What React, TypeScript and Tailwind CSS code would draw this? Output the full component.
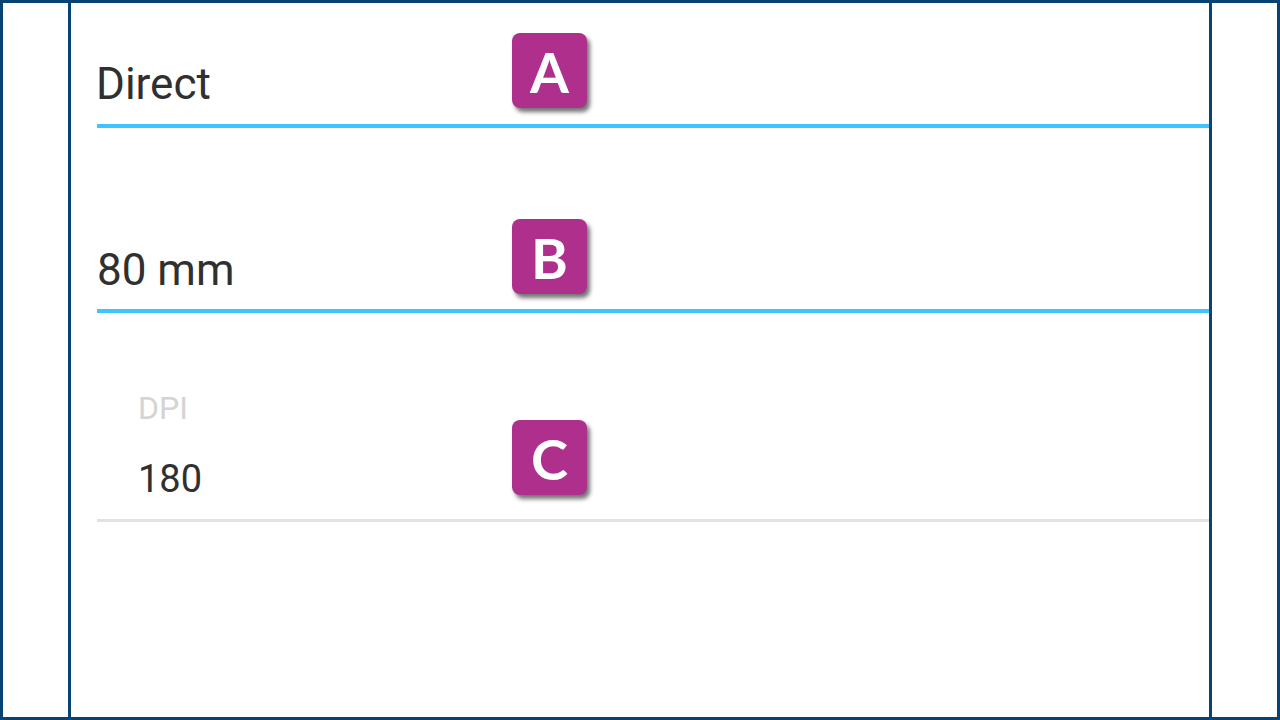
import React from "react";

function Badge({ letter, top }: { letter: string; top: string }) {
  return (
    <div
      className={`absolute left-[441px] ${top} flex h-[75px] w-[75px] items-center justify-center rounded-[8px] bg-[#ae2f8c] text-[56px] font-bold leading-none text-white shadow-[3px_4px_4px_rgba(0,0,0,0.55)]`}
      style={{ fontFamily: "Lato, 'Open Sans', sans-serif" }}
    >
      <span className="mt-[2px]">{letter}</span>
    </div>
  );
}

export default function App() {
  return (
    <div className="h-[720px] w-[1280px] overflow-hidden border-[3px] border-[#074476] bg-white">
      <div className="flex h-full">
        <div className="w-[68px] shrink-0 border-r-[3px] border-[#074476]" />
        <main
          className="relative flex-1 border-r-[3px] border-[#074476] pl-[26px]"
          style={{ fontFamily: "Roboto, 'Noto Sans', sans-serif" }}
        >
          <div className="mt-[59px] border-b-4 border-[#40c4ff] pb-[18px]">
            <div className="-ml-[1px] text-[44px] leading-[44px] text-[#303030]">Direct</div>
          </div>

          <div className="mt-[120px] border-b-4 border-[#40c4ff] pb-[17px]">
            <div className="text-[44px] leading-[44px] text-[#303030]">80 mm</div>
          </div>

          <div className="mt-[79px] border-b-[3px] border-[#e2e2e2] pb-[21px] pl-[41px]">
            <div className="text-[32px] leading-[32px] text-[#d4d4d4]">DPI</div>
            <div className="mt-[36px] text-[38px] leading-[38px] text-[#303030]">180</div>
          </div>

          <Badge letter="A" top="top-[30px]" />
          <Badge letter="B" top="top-[216px]" />
          <Badge letter="C" top="top-[417px]" />
        </main>
        <div className="w-[65px] shrink-0" />
      </div>
    </div>
  );
}
